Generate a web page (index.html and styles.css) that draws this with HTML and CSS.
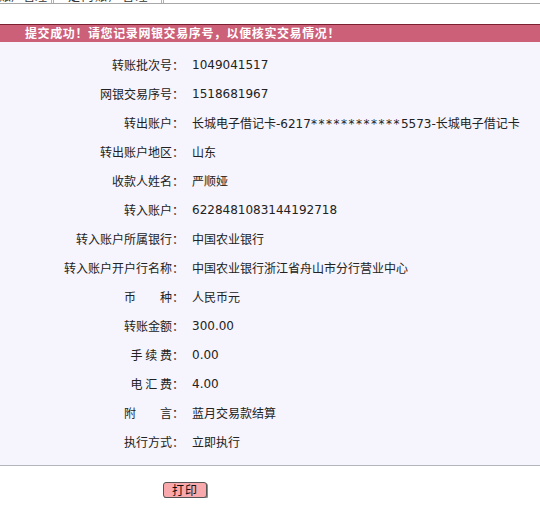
FILE: index.html
```html
<!DOCTYPE html>
<html lang="zh-CN">
<head>
<meta charset="utf-8">
<title>提交成功</title>
<link rel="stylesheet" href="styles.css">
</head>
<body>
<div class="tabs">
  <div class="tab tab-first">账户管理</div>
  <div class="tab tab-second">定向账户管理</div>
</div>
<div class="spacer"></div>
<div class="banner">提交成功！请您记录网银交易序号，以便核实交易情况！</div>
<div class="panel">
  <div class="row"><div class="label">转账批次号：</div><div class="value">1049041517</div></div>
  <div class="row"><div class="label">网银交易序号：</div><div class="value">1518681967</div></div>
  <div class="row"><div class="label">转出账户：</div><div class="value">长城电子借记卡-6217<span class="mask">************</span>5573-长城电子借记卡</div></div>
  <div class="row"><div class="label">转出账户地区：</div><div class="value">山东</div></div>
  <div class="row"><div class="label">收款人姓名：</div><div class="value">严顺娅</div></div>
  <div class="row"><div class="label">转入账户：</div><div class="value">6228481083144192718</div></div>
  <div class="row"><div class="label">转入账户所属银行：</div><div class="value">中国农业银行</div></div>
  <div class="row"><div class="label">转入账户开户行名称：</div><div class="value">中国农业银行浙江省舟山市分行营业中心</div></div>
  <div class="row"><div class="label">币　　种：</div><div class="value">人民币元</div></div>
  <div class="row"><div class="label">转账金额：</div><div class="value">300.00</div></div>
  <div class="row"><div class="label">手 续 费：</div><div class="value">0.00</div></div>
  <div class="row"><div class="label">电 汇 费：</div><div class="value">4.00</div></div>
  <div class="row"><div class="label">附　　言：</div><div class="value">蓝月交易款结算</div></div>
  <div class="row"><div class="label">执行方式：</div><div class="value">立即执行</div></div>
</div>
<div class="actions">
  <button class="btn" type="button">打印</button>
</div>
</body>
</html>
```

FILE: styles.css
```css
html, body {
  margin: 0;
  padding: 0;
  background: #ffffff;
}
body {
  font-family: "DejaVu Sans", "Noto Sans CJK SC", sans-serif;
  font-size: 12px;
  color: #222222;
}
.tabs {
  display: flex;
  align-items: flex-end;
  height: 3px;
  overflow: hidden;
  border-bottom: 1px solid #a8a8a8;
}
.tab {
  line-height: 12px;
  font-size: 12px;
  border-right: 3px double #b0b0b0;
  color: #333;
  white-space: nowrap;
}
.tab-first {
  margin-left: -1px;
  padding: 0 4px 0 0;
}
.tab-second {
  padding: 0 12px 0 14px;
  letter-spacing: 1.5px;
}
.spacer {
  height: 20px;
}
.banner {
  border-top: 1px solid #7c1f30;
  background: #cc6079;
  color: #ffffff;
  font-weight: bold;
  font-family: "Noto Sans CJK SC", sans-serif;
  font-size: 12px;
  letter-spacing: 0.6px;
  height: 17px;
  line-height: 16px;
  padding-left: 25px;
}
.panel {
  background: #f6f4fc;
  border-bottom: 1px solid #b4b4bc;
  padding: 8px 0 9px;
}
.row {
  display: grid;
  grid-template-columns: 184px 1fr;
  height: 29px;
  align-items: center;
}
.label {
  text-align: right;
  white-space: pre;
  font-family: "Noto Sans CJK SC", sans-serif;
}
.value {
  padding-left: 8px;
  white-space: nowrap;
}
.mask {
  letter-spacing: 1.5px;
}
.actions {
  padding: 16px 0 0 163px;
}
.btn {
  width: 44px;
  height: 16px;
  padding: 0;
  margin: 0;
  background: #f9a9ab;
  border: 1px solid #555555;
  border-radius: 3px;
  box-shadow: 1px 1px 0 #8a8a8a;
  font-family: "Noto Sans CJK SC", sans-serif;
  font-size: 12px;
  line-height: 14px;
  color: #111111;
  letter-spacing: 1px;
}
```
